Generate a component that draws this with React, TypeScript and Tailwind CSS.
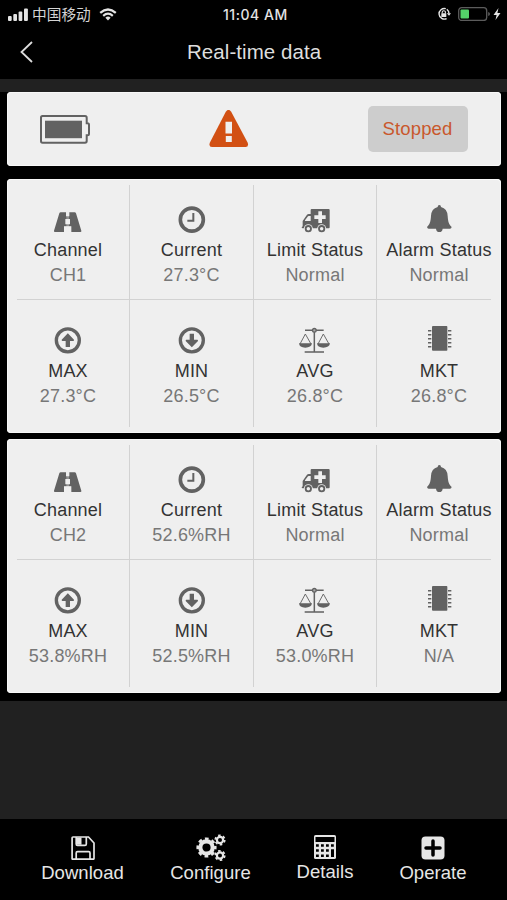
import React from "react";
import { clsx } from "clsx";

interface Reading {
  icon: React.ReactNode;
  label: string;
  value: string;
}

interface CellIconProps {
  children: React.ReactNode;
}

function CellIcon({ children }: CellIconProps) {
  return (
    <svg viewBox="1 0 108 96" className="h-8 w-9 shrink-0 text-[#626262]" fill="currentColor">
      {children}
    </svg>
  );
}

const RoadIcon = () => (
  <CellIcon>
    <path d="M33 28H75Q78 28 79 31L95 83Q96 87 92 87H65V70H43V87H16Q12 87 13 83L29 31Q30 28 33 28Z" />
    <path d="M49 27h10v13H49zM47 48h14v16H47zM44 71h20v17H44z" fill="#efefef" />
    <path d="M50 28h8v59h-8z" fill="#efefef" opacity=".35" />
  </CellIcon>
);

const ClockIcon = () => (
  <CellIcon>
    <circle cx="54.500" cy="50" r="34.5" fill="none" stroke="currentColor" strokeWidth="11" />
    <path d="M59 30V53H41" fill="none" stroke="currentColor" strokeWidth="6" />
  </CellIcon>
);

const AmbulanceIcon = () => (
  <CellIcon>
    <path d="M45 18H96Q99 18 99 21V73Q99 76 96 76H18Q15 76 15 73L18 70V54L31 35Q33 33 36 33H42V21Q42 18 45 18Z" />
    <path d="M36 39H42V54H25V52L34 40Z" fill="#efefef" />
    <path d="M65 25h11v12h11v11H76v12H65V48H53V37h12z" fill="#efefef" />
    <circle cx="35" cy="77" r="13.500" fill="#efefef" />
    <circle cx="75" cy="77" r="13.500" fill="#efefef" />
    <circle cx="35" cy="77" r="8" fill="none" stroke="currentColor" strokeWidth="5.500" />
    <circle cx="75" cy="77" r="8" fill="none" stroke="currentColor" strokeWidth="5.500" />
  </CellIcon>
);

const BellIcon = () => (
  <CellIcon>
    <path d="M56 6Q61 6 61 12Q80 17 81 39C82 57 85 64 93 72Q92 77 88 77H66Q65 87 56 87T46 77H24Q20 77 19 72C27 64 30 57 31 39Q32 17 51 12Q51 6 56 6Z" />
  </CellIcon>
);

const ArrowCircleIcon = ({ down = false }: { down?: boolean }) => (
  <CellIcon>
    <circle cx="54.500" cy="49" r="34.5" fill="none" stroke="currentColor" strokeWidth="10" />
    <path
      d="M54.5 28L73 47Q73 51 71 51H61V69H48V51H38Q36 51 36 47Z"
      transform={down ? "rotate(180 54.5 49)" : undefined}
    />
  </CellIcon>
);

const ScaleIcon = () => (
  <CellIcon>
    <path d="M25 19H81M53 19V84M24 84H82" fill="none" stroke="currentColor" strokeWidth="4.500" />
    <circle cx="53" cy="19" r="5.500" fill="#aaa" stroke="currentColor" strokeWidth="4" />
    <path
      d="M26 30L10 60M26 30L43 60M80 30L64 60M80 30L97 60"
      fill="none"
      stroke="currentColor"
      strokeWidth="2.800"
    />
    <path d="M7 58H46Q44 71 26 71T7 58ZM61 58H100Q98 71 80 71T61 58Z" />
  </CellIcon>
);

const ChipIcon = () => (
  <CellIcon>
    <path d="M37 6H78Q80 6 80 9V78Q80 80 78 80H37Q34 80 34 78V9Q34 6 37 6Z" />
    <path
      d="M22 20H32M22 32H32M22 44H32M22 56H32M22 68H32M82 20H92M82 32H92M82 44H92M82 56H92M82 68H92"
      stroke="currentColor"
      strokeWidth="4.500"
    />
  </CellIcon>
);

function buildReadings(
  channel: string,
  current: string,
  max: string,
  min: string,
  avg: string,
  mkt: string
): Reading[][] {
  return [
    [
      { icon: <RoadIcon />, label: "Channel", value: channel },
      { icon: <ClockIcon />, label: "Current", value: current },
      { icon: <AmbulanceIcon />, label: "Limit Status", value: "Normal" },
      { icon: <BellIcon />, label: "Alarm Status", value: "Normal" },
    ],
    [
      { icon: <ArrowCircleIcon />, label: "MAX", value: max },
      { icon: <ArrowCircleIcon down />, label: "MIN", value: min },
      { icon: <ScaleIcon />, label: "AVG", value: avg },
      { icon: <ChipIcon />, label: "MKT", value: mkt },
    ],
  ];
}

const channels = [
  buildReadings("CH1", "27.3°C", "27.3°C", "26.5°C", "26.8°C", "26.8°C"),
  buildReadings("CH2", "52.6%RH", "53.8%RH", "52.5%RH", "53.0%RH", "N/A"),
];

function ChannelCard({ rows }: { rows: Reading[][] }) {
  return (
    <section className="h-[254px] rounded-[4px] bg-[#efefef] pt-1.5 shadow-[inset_0_0_0_1px_#f8f8f8]">
      {rows.map((row, i) => (
        <React.Fragment key={i}>
          {i > 0 && <div className="mx-2.5 h-px bg-[#d2d2d2]" />}
          <div
            className={clsx(
              "grid grid-cols-[123px_124px_123px_124px]",
              i === 0 ? "h-[114px]" : "h-[127px]"
            )}
          >
            {row.map((item) => (
              <div
                key={item.label}
                className={clsx(
                  "flex flex-col items-center whitespace-nowrap border-[#d2d2d2] text-[18px] leading-6 tracking-[0.2px] not-last:border-r",
                  i === 0 ? "pt-[18px]" : "pt-6"
                )}
              >
                {item.icon}
                <span className="mt-[3px] text-[#333]">{item.label}</span>
                <span className="mt-px text-[#777]">{item.value}</span>
              </div>
            ))}
          </div>
        </React.Fragment>
      ))}
    </section>
  );
}

function StatusBar() {
  return (
    <div className="flex h-7 items-center text-[#e4e4e4]">
      <div className="flex w-[223px] items-center pl-2">
        <svg viewBox="0 0 20 13" className="h-[13px] w-5" fill="currentColor">
          <rect x="0" y="8" width="3.700" height="5" rx="1" />
          <rect x="5.300" y="6" width="3.700" height="7" rx="1" />
          <rect x="10.600" y="3.500" width="3.700" height="9.500" rx="1" />
          <rect x="16" y="0.500" width="3.900" height="12.500" rx="1" />
        </svg>
        <span className="ml-1 font-['Noto_Sans_CJK_SC',sans-serif] text-[14.700px] leading-5 text-[#d4d4d4]">
          中国移动
        </span>
        <svg viewBox="0 0 18 13" className="ml-2 h-[13px] w-[18px]" fill="none" stroke="currentColor">
          <path d="M1.200 4.800Q9 -1.800 16.800 4.800" strokeWidth="2.300" />
          <path d="M4.200 7.800Q9 3.600 13.800 7.800" strokeWidth="2.200" />
          <path d="M6.400 9.700Q9 7.500 11.600 9.700L9 12.600Z" fill="currentColor" stroke="none" />
        </svg>
      </div>
      <span className="w-[214px] font-[Inter,sans-serif] text-[14px] font-medium tracking-[0.55px]">
        11:04 AM
      </span>
      <svg viewBox="0 0 14 14" className="h-3.5 w-3.5" fill="none" stroke="currentColor">
        <path d="M8.800 1.700A5.300 5.300 0 1 0 9.600 11.600M9.800 2.200Q12 4 12 6.500" strokeWidth="1.400" />
        <path d="M9.800 6.200H14L12 8.800Z" fill="currentColor" stroke="none" />
        <rect x="4.300" y="6.200" width="5" height="3.900" rx=".5" fill="currentColor" stroke="none" />
        <path d="M5.200 6.500V5.200Q5.200 3.800 6.800 3.800T8.400 5.200V6.500" strokeWidth="1.100" />
      </svg>
      <svg viewBox="0 0 32 14" className="ml-[7px] h-3.5 w-8">
        <rect x=".7" y=".7" width="28" height="12.800" rx="3" fill="none" stroke="#5c5c5c" strokeWidth="1.300" />
        <rect x="2.500" y="2.500" width="8.500" height="9" rx="1" fill="#54d169" />
        <path d="M30.200 5Q32 5.500 32 7T30.200 9Z" fill="#5c5c5c" />
      </svg>
      <svg viewBox="0 0 8 12" className="ml-[3px] h-3 w-2" fill="currentColor">
        <path d="M5.500 0L0.500 7H3.600L2.500 12L7.500 5H4.400Z" />
      </svg>
    </div>
  );
}

function DeviceCard() {
  return (
    <section className="flex h-[74px] items-center rounded-[4px] bg-[#efefef] pl-[33px] shadow-[inset_0_0_0_1px_#f8f8f8]">
      <svg viewBox="0 0 50 29" className="h-[29px] w-[50px]">
        <path
          d="M2.500 1H45Q46.700 1 46.700 2.700V8.200H47.500Q49 8.200 49 9.700V18.800Q49 20.300 47.500 20.300H46.700V26Q46.700 27.700 45 27.700H2.500Q1 27.700 1 26V2.700Q1 1 2.500 1Z"
          fill="none"
          stroke="#626262"
          strokeWidth="2"
        />
        <rect x="5" y="5.700" width="37" height="17.500" fill="#626262" />
      </svg>
      <svg viewBox="0.5 0.500 40 38" className="ml-[119px] h-[38px] w-10">
        <path
          d="M17.300 2.200Q20 -1.600 22.700 2.200L39.200 33.200Q40.500 37.500 37 37.500H3.500Q0 37.500 1.300 33.200Z"
          fill="#d25013"
        />
        <path d="M17 12.200h6.500v11.800h-6.500zM17.300 26.500h6v6h-6z" fill="#efefef" />
      </svg>
      <button className="ml-[118.500px] h-[46px] w-[100px] rounded-[5px] bg-[#cdcdcd] text-[18.500px] tracking-[0.15px] text-[#c9582c]">
        Stopped
      </button>
    </section>
  );
}

const SaveIcon = () => (
  <svg viewBox="0 0 24 24" className="h-6 w-6" fill="none" stroke="currentColor" strokeWidth="1.700">
    <path d="M2 1H17.500L23 7V22.500Q23 23.200 22.200 23.200H1.900Q1.100 23.200 1.100 22.500V1.800Q1.100 1 2 1Z" />
    <path d="M5.200 1V8Q5.200 9.400 6.500 9.400H14Q15.300 9.400 15.300 8V1M5.200 23V17Q5.200 15.600 6.500 15.600H17.700Q19 15.600 19 17V23" />
    <path d="M6 1.500H10.500V8.700H6Z" fill="currentColor" stroke="none" />
  </svg>
);

const CogsIcon = () => (
  <svg viewBox="0 0 30 27" className="h-[27px] w-[30px]" fill="none" stroke="currentColor">
    <circle cx="10.500" cy="13.500" r="6.200" strokeWidth="4.200" />
    <circle cx="10.500" cy="13.500" r="8.800" strokeWidth="2.600" strokeDasharray="3.700 3.211" strokeDashoffset="1.850" />
    <circle cx="24" cy="6" r="3.100" strokeWidth="2.200" />
    <circle cx="24" cy="6" r="4.700" strokeWidth="1.800" strokeDasharray="2.500 2.422" />
    <circle cx="24" cy="21.500" r="3.100" strokeWidth="2.200" />
    <circle cx="24" cy="21.500" r="4.700" strokeWidth="1.800" strokeDasharray="2.500 2.422" />
  </svg>
);

const CalculatorIcon = () => (
  <svg viewBox="0 0 22 24" className="h-6 w-[22px]">
    <rect x="0" y="0" width="22" height="24" rx="1.600" fill="currentColor" />
    <path
      d="M1.500 2h19v5h-19zM2 9.300h2.800v2.400H2zM7 9.300h2.800v2.400H7zM12 9.300h2.800v2.400H12zM17 9.300h2.800v2.400H17zM2 14.300h2.800v2.400H2zM7 14.300h2.800v2.400H7zM12 14.300h2.800v2.400H12zM17 14.300h3v7.600h-3zM2 19.500h2.800v2.400H2zM7 19.500h2.800v2.400H7zM12 19.500h2.800v2.400H12z"
      fill="#000"
    />
  </svg>
);

const PlusSquareIcon = () => (
  <svg viewBox="0 0 24 24" className="h-6 w-6">
    <rect x=".5" y=".5" width="23" height="23" rx="4" fill="currentColor" />
    <path d="M12 5V19M5 12H19" stroke="#000" strokeWidth="3.500" strokeLinecap="round" />
  </svg>
);

const navItems = [
  { label: "Download", icon: <SaveIcon />, className: "w-[128px]" },
  { label: "Configure", icon: <CogsIcon />, className: "w-[128px]" },
  { label: "Details", icon: <CalculatorIcon />, className: "w-[101px] -mt-px" },
  { label: "Operate", icon: <PlusSquareIcon />, className: "w-[115px]" },
];

export default function App() {
  return (
    <div className="flex h-[900px] w-[507px] flex-col overflow-hidden bg-[#212121] font-['Liberation_Sans',Arial,sans-serif]">
      <header className="h-[79px] bg-black">
        <StatusBar />
        <div className="flex h-12 items-center pl-5">
          <svg viewBox="0 0 13 22" className="h-[22px] w-[13px]" fill="none" stroke="#ddd" strokeWidth="1.800">
            <path d="M12 1L1.500 11L12 21" />
          </svg>
          <h1 className="ml-[154px] text-[20.500px] leading-6 tracking-[0.07px] text-[#dedede]">Real-time data</h1>
        </div>
      </header>

      <main className="mt-[13px] h-[609px] bg-black pl-[7px] pr-1.5">
        <DeviceCard />
        <div className="mt-[13px] flex flex-col gap-1.5">
          {channels.map((rows) => (
            <ChannelCard key={rows[0][0].value} rows={rows} />
          ))}
        </div>
      </main>

      <nav className="mt-auto flex h-[81px] bg-black pl-[18.500px] text-[#e6e6e6]">
        {navItems.map((item) => (
          <button
            key={item.label}
            className={clsx("flex flex-col items-center pt-[15px]", item.className)}
          >
            <span className="flex h-[27px] items-center">{item.icon}</span>
            <span className="text-[18.500px] leading-6 tracking-[0.05px]">{item.label}</span>
          </button>
        ))}
      </nav>
    </div>
  );
}
